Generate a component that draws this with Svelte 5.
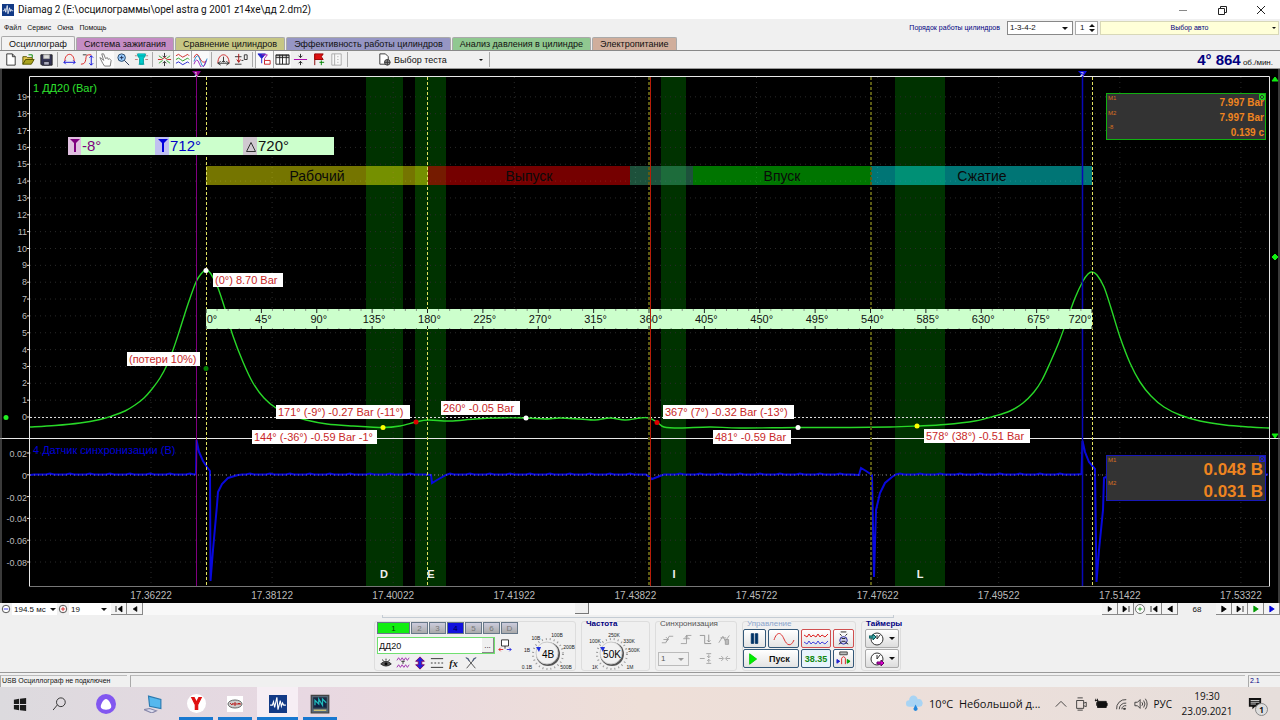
<script>
	// Tabs across the top of the program window
	const tabs = [
		{ name: 'Осциллограф', color: '#f2f2f2' },
		{ name: 'Система зажигания', color: '#c48cc4' },
		{ name: 'Сравнение цилиндров', color: '#c6c684' },
		{ name: 'Эффективность работы цилиндров', color: '#9696c4' },
		{ name: 'Анализ давления в цилиндре', color: '#90c890' },
		{ name: 'Электропитание', color: '#d0ae9c' }
	];

	// Every icon is a list of [path, stroke, fill]
	const icons = {
		newFile: [['M4 2h6l3 3v9h-9zM10 2v3h3', '#333', '#fff']],
		open: [['M2 5h4l1 1h5v2H5l-3 5z', '#555500', '#e6c650'], ['M2 13l3-5h9l-3 5z', '#555500', '#aaa420'], ['M8 3h4v3', '#080', 'none']],
		save: [['M2 3h12v11H3l-1-1z', '#222', '#335'], ['M5 3h6v4H5z', '#aaa', '#ddd'], ['M5 10h6v4H5z', '#223', '#aab']],
		arch: [['M3 10C3 0 13 0 13 10', '#d22', 'none'], ['M2 11h12M4 9l-2 2 2 2M12 9l2 2-2 2', '#11d', 'none']],
		slope: [['M1 13c8 0 3-10 8-10h3', '#d22', 'none'], ['M12 4v10M10 6l2-2 2 2M10 12l2 2 2-2', '#11d', 'none'], ['M3 3h4', '#333', 'none']],
		hand: [['M4 7l-2-1 3 6 2 3h6l1-6-2-2-1 1-1-2-2 1-2-5-2 0 2 7z', '#777', '#fff']],
		zoom: [['M10 6a4 4 0 1 1-8 0a4 4 0 1 1 8 0z', '#246', '#9cf'], ['M9 9l5 5M4 6h4M6 4v4', '#235', 'none']],
		lamp: [['M1 4h2M13 4h2M1 8h3M12 8h3M3 2l2 1M13 2l-2 1', '#b77', 'none'], ['M4 4h8l-2 3v6H6V7z', '#099', '#0cc'], ['M4 2h8v2H4zM5 13h6', '#0aa', '#0dd']],
		cross: [['M8 1v5M8 10v5M6 4l2 2 2-2M6 12l2-2 2 2', '#333', 'none'], ['M1 8h4l3-2 3 2h4', '#c22', 'none'], ['M2 4l4 3M2 12l4-3M14 4l-4 3M14 12l-4-3', '#3a3', 'none']],
		waves: [['M1 4q3-3 5 0t5 0 4 0', '#c22', 'none'], ['M1 8q3-3 5 0t5 0 4 0', '#292', 'none'], ['M1 12q3-3 5 0t5 0 4 0', '#22c', 'none']],
		waves2: [['M1 6q3-7 6 0t7 4', '#c22', 'none'], ['M1 10q4-12 7 0t7-3', '#28c', 'none'], ['M1 13q3-9 6 0t7-4', '#92b', 'none']],
		dome: [['M2 12C2 0 14 0 14 12', '#c22', 'none'], ['M2 12h12M5 10l-3 2 3 2M11 10l3 2-3 2M8 5v6M6 11l2-2 2 2', '#333', 'none']],
		zero: [['M1 5h7M1 13h7', '#333', 'none'], ['M5 2v9M3 8l2 3 2-3', '#a11', 'none'], ['M11 3h3v5h-3zM8 9h2', '#333', 'none']],
		cursors: [['M1 2h8L5 7zM5 7v5', '#22c', '#22c'], ['M5 3h6l-3 4v6', '#a2a', 'none'], ['M8 9h6v4H8z', '#c22', '#fff']],
		table: [['M1 3h14v10H1zM1 6h14M5 3v10M8 3v10M12 3v10', '#222', '#fff'], ['M1 4h14', '#222', 'none']],
		split: [['M1 8h14', '#a0a', 'none'], ['M8 2v4M6 4l2 2 2-2M8 14v-4M6 12l2-2 2 2', '#222', 'none']],
		flag: [['M4 2v12', '#800', 'none'], ['M4 2h9l-2 3 2 3H4z', '#900', '#d11'], ['M9 11h5M11 9v5', '#080', 'none']],
		page: [['M3 2h10v12H3zM6 2v12', '#aaa', '#f8f8f8'], ['M9 5h1M9 8h1M9 11h1', '#999', 'none']],
		test: [['M3 2h6l3 3v8H3z', '#333', '#fff'], ['M14 11a3 3 0 1 1-6 0a3 3 0 1 1 6 0z', '#333', '#999'], ['M8 11h6M11 8v6', '#333', 'none']],
		eye: [['M2 9q6-6 12 0q-6 5-12 0z', '#222', '#555'], ['M7 8h2v2H7z', '#000', '#000'], ['M4 4l1 2M8 3v2M12 4l-1 2', '#222', 'none']],
		zigzag: [['M1 5l2-3 2 3 2-3 2 3 2-3 2 3 2-3M1 13l2-3 2 3 2-3 2 3 2-3 2 3 2-3', '#92a', 'none'], ['M6 6h4M8 6v3', '#222', 'none']],
		updown: [['M8 1L3 6h3v4H3l5 5 5-5h-3V6h3z', '#800060', '#22d']],
		lines: [['M1 3h14M1 13h14', '#222', 'none'], ['M1 8h2M5 8h2M9 8h2M13 8h2', '#222', 'none']],
		tools: [['M3 2l10 12M13 2L3 14', '#444', 'none'], ['M2 2l3 1 1 3M14 2l-3 1-1 3', '#346', '#9ac']],
		probe: [['M4 1h8v7H4zM8 8v3', '#222', '#fff'], ['M1 12h5M1 12l2-2M1 12l2 2', '#d22', 'none'], ['M10 12h5M15 12l-2-2M15 12l-2 2', '#22d', 'none']],
		pause: [['M4 2h3v12H4zM9 2h3v12H9z', '#036', '#036']],
		bug: [['M5 1h6M4 3l2 2M12 3l-2 2', '#222', 'none'], ['M12 10a4 4 0 1 1-8 0a4 4 0 1 1 8 0z', '#229', '#cce'], ['M6 8h4M6 11h4M3 14l3-2M13 14l-3-2', '#222', 'none']],
		play: [['M3 2l8 6-8 6z', '#0c0', '#0e0']],
		auto: [['M4 1h8v3H4z', '#444', '#bbb'], ['M6 14V8q2-4 4 0v6', '#d22', 'none'], ['M1 9l3 2-3 2z', '#22c', '#22c'], ['M12 9l3 2-3 2z', '#090', '#0a0']],
		clockIn: [['M14 8a6 6 0 1 1-12 0a6 6 0 1 1 12 0zM8 8l3-4M8 8V4', '#333', '#fff'], ['M0 5h4V3l3 3-3 3V7H0z', '#055', '#4aa']],
		clockOut: [['M14 8a6 6 0 1 1-12 0a6 6 0 1 1 12 0zM8 8l3-4M8 8V4', '#333', '#fff'], ['M8 11h4V9l3 3-3 3v-2H8z', '#606', '#d0c']],
		trigUp: [['M1 12h5l4-8h5M3 8h6', '#999', 'none'], ['M6 5l3 3-3 3', '#999', 'none']],
		trigEdge: [['M1 13h7V3h6M4 7h8', '#999', 'none'], ['M6 6l2-3 2 3', '#999', 'none']],
		trigDown: [['M1 3h6v10h8M12 2v9M10 9l2 2 2-2', '#888', 'none']],
		trigBoth: [['M1 12l5-8 3 6 5-7M3 6h7', '#999', 'none'], ['M9 8h4v6H9z', '#999', '#bbb']],
		level: [['M1 8h6M9 2h6M9 14h6M12 3v4M12 13V9', '#999', 'none'], ['M10 5l2 2 2-2M10 11l2-2 2 2', '#999', 'none']],
		inward: [['M1 8h5M4 5l3 3-3 3M15 8h-5M12 5L9 8l3 3', '#999', 'none']],
		minus: [['M13 8a5 5 0 1 1-10 0a5 5 0 1 1 10 0z', '#222', '#fff'], ['M5 8h6', '#00d', 'none']],
		plus: [['M13 8a5 5 0 1 1-10 0a5 5 0 1 1 10 0z', '#222', '#fff'], ['M5 8h6M8 5v6', '#c00', 'none']],
		target: [['M14 8a6 6 0 1 1-12 0a6 6 0 1 1 12 0z', '#444', '#fff'], ['M5 8h6M8 5v6', '#080', '#080']],
		first: [['M4 4v8', '#000', 'none'], ['M12 4L7 8l5 4z', '#000', '#000']],
		prev: [['M11 4L5 8l6 4z', '#000', '#000']],
		next: [['M5 4l6 4-6 4z', '#000', '#000']],
		last: [['M12 4v8', '#000', 'none'], ['M4 4l5 4-5 4z', '#000', '#000']],
		nextGreen: [['M5 4l6 4-6 4z', '#090', '#090']],
		nextBlue: [['M5 4l6 4-6 4z', '#00d', '#00d']],
		logo: [['M0 0h16v16H0z', 'none', '#123a86'], ['M1 9h2l1-3 1 5 2-9 1 11 2-8 1 5 1-3 1 2h2', '#fff', 'none']],
		windows: [['M1 3l6-1v6H1zM8 2l7-1v7H8zM1 9h6v6l-6-1zM8 9h7v7l-7-1z', 'none', '#1c1c1c']],
		search: [['M14 6a5 5 0 1 1-10 0a5 5 0 1 1 10 0zM5 9l-5 6', '#222', 'none']],
		alice: [['M16 8a8 8 0 1 1-16 0a8 8 0 1 1 16 0z', 'none', '#8257f0'], ['M8 4c2 0 5 5 4 7s-7 2-8 0 2-7 4-7z', 'none', '#fff']],
		computer: [['M4 1l11 3v8L5 10z', '#2a7ab0', '#55b8ee'], ['M0 13l5-1 6 2-4 2z', '#88a', '#dde']],
		yandex: [['M16 8a8 8 0 1 1-16 0a8 8 0 1 1 16 0z', 'none', '#fff'], ['M4 3h2l2 4 2-4h2L9 9v4H7V9z', '#e01010', '#e01010']],
		yom: [['M0 0h16v16H0z', 'none', '#fff'], ['M15 8a7 4 0 1 1-14 0a7 4 0 1 1 14 0z', '#666', '#ccc'], ['M3 7l2 2 1-2M7 7h2v2H7zM11 9V7l1 1 1-1v2', '#b22', 'none']],
		scope: [['M1 1h14v14H1z', '#444', '#567'], ['M3 3h10v8H3z', '#234', '#124'], ['M4 9V5l3 3V4l3 5V4l3 3', '#2bb', 'none'], ['M3 13h10', '#dc7', 'none']],
		cloud: [['M3 11a3 3 0 0 1 0-6a4 4 0 0 1 8-1a3 3 0 0 1 2 7z', 'none', '#a8d4f4'], ['M9 9l-2 4a2 2 0 1 0 4 0z', 'none', '#2288dd']],
		chevron: [['M2 11l6-6 6 6', '#333', 'none']],
		camera: [['M3 4h8v9H3zM11 7l3-1v5l-3-1M4 1h6M4 15h6', '#333', 'none']],
		battery: [['M4 5h10v7H4zM14 7h1v3h-1z', '#111', '#111'], ['M1 4h4M2 2v3M4 2v3M3 6v4', '#111', 'none']],
		wifi: [['M3 14A10 10 0 0 1 14 3M6 14a7 7 0 0 1 8-7M9 14a4 4 0 0 1 5-4', '#333', 'none'], ['M11 13h2v1h-2z', '#333', '#333']],
		speaker: [['M1 6h3l3-3v10l-3-3H1zM9 6q2 2 0 4M11 4q3 4 0 8M13 2q4 6 0 12', '#333', 'none']],
		notify: [['M1 1h14v10H8l-3 3v-3H1z', 'none', '#111'], ['M3 4h10M3 6h10M3 8h6', '#ddd', 'none']]
	};

	const toolGroups = [
		['newFile', 'open', 'save'],
		['arch', 'slope', 'hand', 'zoom', 'lamp'],
		['cross', 'waves', 'waves2'],
		['dome', 'zero'],
		['cursors', 'table', 'split', 'flag', 'page']
	];
	const pressed = ['hand', 'waves', 'waves2', 'cursors', 'table'];

	// Chart scales
	const degX = (deg) => 206 + deg * 886 / 720;
	const barY = (bar) => 417 - bar * 16.85;

	const bars = Array.from({ length: 20 }, (_, i) => i);
	const volts = ['0.02', '0', '-0.02', '-0.04', '-0.06', '-0.08'].map((label, i) => ({ label, y: 453 + i * 21.8 }));
	const times = Array.from({ length: 10 }, (_, i) => ({
		label: (17.36222 + i * 0.019).toFixed(5),
		x: 151 + i * 121.1
	}));
	const degrees = Array.from({ length: 17 }, (_, i) => i * 45);
	const ticks = Array.from({ length: 81 }, (_, i) => i * 9);

	const zones = [
		{ x: 366, w: 37, letter: 'D', tx: 384 },
		{ x: 415, w: 31, letter: 'E', tx: 431 },
		{ x: 661, w: 25, letter: 'I', tx: 674 },
		{ x: 895, w: 50, letter: 'L', tx: 920 }
	];

	const phases = [
		{ name: 'Рабочий', x: 206, w: 222, tx: 317, color: '#ffff00' },
		{ name: 'Выпуск', x: 428, w: 202, tx: 529, color: '#ff0000' },
		{ name: '', x: 630, w: 63, tx: 661, color: '#40b080' },
		{ name: 'Впуск', x: 693, w: 178, tx: 782, color: '#00ff00' },
		{ name: 'Сжатие', x: 871, w: 221, tx: 982, color: '#00ffff' }
	];

	const labels = [
		{ text: '(0°) 8.70 Bar', x: 213, y: 273, w: 70 },
		{ text: '(потери 10%)', x: 127, y: 352, w: 73 },
		{ text: '171° (-9°) -0.27 Bar (-11°)', x: 276, y: 405, w: 134 },
		{ text: '144° (-36°) -0.59 Bar -1°', x: 252, y: 430, w: 125 },
		{ text: '260° -0.05 Bar', x: 441, y: 401, w: 79 },
		{ text: '367° (7°) -0.32 Bar (-13°)', x: 663, y: 405, w: 131 },
		{ text: '481° -0.59 Bar', x: 713, y: 430, w: 78 },
		{ text: '578° (38°) -0.51 Bar', x: 924, y: 429, w: 106 }
	];

	const dots = [
		[206, 270.5, '#fff'], [206, 368.5, '#008000'], [383, 427.5, '#ff0'], [416, 422, '#d00'],
		[526, 418, '#fff'], [657, 422.5, '#d00'], [798, 427.5, '#fff'], [917, 426, '#ff0']
	];

	const pressure = [
		[30, 427], [55, 425.5], [80, 423], [100, 419.5], [112, 416], [125, 411], [135, 405], [144, 398],
		[152, 389], [160, 378], [167, 365], [173, 350], [180, 329], [188, 304], [196, 282], [201, 274],
		[206, 270], [211, 274], [218, 288], [225, 309], [233, 336], [243, 362], [253, 383], [264, 398],
		[276, 408], [290, 415], [306, 420], [327, 424], [353, 426], [383, 427.5], [400, 426], [416, 422],
		[428, 420], [450, 421], [475, 419], [500, 418], [526, 418], [545, 419], [560, 418], [580, 419],
		[595, 420], [610, 418], [625, 420], [640, 418], [649, 418], [657, 422], [664, 427], [680, 428],
		[710, 427], [740, 428], [798, 427.5], [850, 427.5], [890, 427], [917, 426], [945, 424.5],
		[975, 421], [995, 416], [1010, 411], [1023, 403], [1034, 392], [1042, 380], [1050, 363],
		[1059, 342], [1067, 320], [1075, 298], [1083, 281], [1088, 274], [1092, 272], [1097, 275],
		[1104, 287], [1111, 308], [1120, 337], [1130, 363], [1140, 382], [1151, 396], [1164, 407],
		[1180, 415], [1200, 421], [1225, 425], [1250, 427], [1269, 428]
	];

	// Smooth line through the points
	function smooth(points) {
		let d = `M${points[0][0]} ${points[0][1]}`;
		for (let i = 0; i < points.length - 1; i++) {
			const p0 = points[i - 1] || points[i];
			const p1 = points[i];
			const p2 = points[i + 1];
			const p3 = points[i + 2] || p2;
			d += `C${p1[0] + (p2[0] - p0[0]) / 6} ${p1[1] + (p2[1] - p0[1]) / 6} ${p2[0] - (p3[0] - p1[0]) / 6} ${p2[1] - (p3[1] - p1[1]) / 6} ${p2[0]} ${p2[1]}`;
		}
		return d;
	}

	// Flat part of the sync signal with a little noise on it
	function flat(from, to) {
		let d = '';
		for (let x = from; x < to; x += 4) {
			d += `L${x} ${474.5 - ((x * 7) % 5 === 0 ? 1 : 0)}`;
		}
		return d;
	}

	const sync = 'M30 475' + flat(34, 195) +
		'L196 474L196.5 440L199 452L203 461L207 467L210 471L210.5 581L213 550L217 505L218 492L222 484L228 478L238 475' + flat(242, 428) +
		'L431 475L432 483L437 480L446 475' + flat(450, 648) +
		'L652 479L660 476' + flat(664, 856) +
		'L859 475L861 468L866 471L872 475L874 577L876 510L880 493L885 483L892 477' + flat(896, 1080) +
		'L1081.5 474L1082.5 441L1085 452L1089 462L1095 469L1096.5 582L1099 550L1103 510L1104 478L1108 476' + flat(1112, 1269);

	const channels = ['1', '2', '3', '4', '5', '6', 'D'];
	const channelTools = ['eye', 'zigzag', 'updown', 'lines', 'fx', 'tools'];
	const syncTools = ['trigUp', 'trigEdge', 'trigDown', 'trigBoth'];

	const voltKnob = {
		value: '4В',
		marks: [['0.1В', 9, 47], ['1В', 9, 30], ['10В', 18, 18], ['100В', 39, 15], ['200В', 51, 27], ['500В', 48, 47]]
	};
	const freqKnob = {
		value: '50K',
		marks: [['1K', 13, 47], ['100K', 13, 21], ['250K', 32, 15], ['330K', 47, 21], ['500K', 52, 30], ['1M', 48, 47]]
	};

	const apps = [
		{ icon: 'windows', title: 'Пуск', size: 14, width: 40 },
		{ icon: 'search', title: 'Поиск', size: 14, width: 40 },
		{ icon: 'alice', title: 'Алиса', size: 20, width: 52 },
		{ icon: 'computer', title: 'Компьютер', size: 18, width: 42 },
		{ icon: 'yandex', title: 'Яндекс', size: 19, width: 34, open: true },
		{ icon: 'yom', title: 'YOM', size: 16, width: 34, open: true },
		{ icon: 'logo', title: 'Diamag 2', size: 18, width: 41, open: true, active: true },
		{ icon: 'scope', title: 'Осциллограф', size: 20, width: 34, open: true }
	];
	const tray = ['chevron', 'camera', 'battery', 'wifi', 'speaker'];

	let tab = $state('Осциллограф');
	let channel = $state('4');
</script>

{#snippet icon(name, size)}
	<svg class="icon" width={size} height={size} viewBox="0 0 16 16" aria-hidden="true">
		{#each icons[name] as [d, stroke, fill]}
			<path {d} {stroke} {fill} />
		{/each}
	</svg>
{/snippet}

{#snippet knob(data)}
	<svg class="knob" width="64" height="50" viewBox="0 0 64 50">
		<circle class="dial" cx="30" cy="32" r="15" />
		<circle class="shade" cx="30" cy="32" r="12" />
		<circle class="face" cx="29" cy="31" r="11" />
		<path class="pointer" d="M18 25l5 0-2 5z" />
		<text class="value" x="30" y="36">{data.value}</text>
		{#each data.marks as [text, x, y]}
			<text class="mark" {x} {y}>{text}</text>
		{/each}
	</svg>
{/snippet}

<div class="window">
	<header class="title-bar">
		{@render icon('logo', 12)}
		<h1>Diamag 2 (E:\осцилограммы\opel astra g 2001 z14xe\дд 2.dm2)</h1>
		<button aria-label="Свернуть"><svg width="10" height="10"><path d="M1 5.5h8" stroke="#888" /></svg></button>
		<button aria-label="Развернуть"><svg width="10" height="10"><path d="M1.5 3.5h6v6h-6zM3.5 3.5v-2h6v6h-2" stroke="#222" fill="none" /></svg></button>
		<button aria-label="Закрыть"><svg width="10" height="10"><path d="M1 1l8 8M9 1l-8 8" stroke="#222" /></svg></button>
	</header>

	<div class="menu-bar">
		<nav>
			<a href="#file">Файл</a>
			<a href="#service">Сервис</a>
			<a href="#windows">Окна</a>
			<a href="#help">Помощь</a>
		</nav>
		<label for="order">Порядок работы цилиндров</label>
		<span class="drop order">
			<select id="order"><option>1-3-4-2</option></select>
		</span>
		<span class="spin">
			<input aria-label="Цилиндр" value="1" />
			<svg width="6" height="10"><path d="M0 4l3-3 3 3zM0 6l3 3 3-3z" fill="#111" /></svg>
		</span>
		<button class="car">Выбор авто</button>
	</div>

	<div class="tabs">
		{#each tabs as t}
			<button class:active={tab === t.name} style="background: {t.color}" onclick={() => (tab = t.name)}>{t.name}</button>
		{/each}
	</div>

	<div class="toolbar">
		{#each toolGroups as group}
			{#each group as name}
				<button class="tool" class:pressed={pressed.includes(name)} aria-label={name}>{@render icon(name, 15)}</button>
			{/each}
			<span class="sep"></span>
		{/each}
		<button class="test">{@render icon('test', 15)} Выбор теста</button>
		<span class="sep"></span>
		<p class="rpm"><b>4° 864</b> об./мин.</p>
	</div>

	<svg class="chart" viewBox="0 69 1280 534">
		<rect x="0" y="69" width="1280" height="534" />

		<!-- Valve zones -->
		{#each zones as z}
			<rect x={z.x} y="77" width={z.w} height="509" fill="#003200" />
		{/each}

		<!-- Grid and axis labels -->
		{#each bars as b}
			<path class="grid" d="M30 {barY(b)}H1269" />
			<path class="frame" d="M27 {barY(b)}h3" />
			<text class="axis end" x="27" y={barY(b) + 3}>{b}</text>
		{/each}
		{#each volts as v}
			<path class="grid" d="M30 {v.y}H1269" />
			<path class="frame" d="M27 {v.y}h3" />
			<text class="axis end" x="27" y={v.y + 4}>{v.label}</text>
		{/each}
		{#each times as t}
			<path class="grid" d="M{t.x} 77V586" />
			<text class="time" x={t.x} y="599">{t.label}</text>
		{/each}

		<path class="zero" d="M30 417.5H1269" />
		<path class="frame" d="M0 438.5H1280M29.5 586V76.5H1269.5V586" />
		<path d="M29 586.5H1270" stroke="#777" />
		<path d="M1 69V603M1279 69V603" stroke="#777" />

		<text class="name" x="33" y="92" fill="#2fe02f">1 ДД20 (Bar)</text>
		<text class="name" x="33" y="454" fill="#0000d8">4 Датчик синхронизации (В)</text>

		<path d={sync} fill="none" stroke="#0808dc" stroke-width="2" />
		<path class="zero dim" d="M30 475H1269" />
		<path d={smooth(pressure)} fill="none" stroke="#28d828" stroke-width="1.4" />

		<!-- Phases of the cycle -->
		{#each phases as p}
			<rect x={p.x} y="166" width={p.w} height="19" fill={p.color} fill-opacity="0.46" />
			<text class="phase" x={p.tx} y="181">{p.name}</text>
		{/each}

		<path class="angle" d="M206.5 77V586M427.5 77V586M1092.5 77V586" />
		<path class="angle dim" d="M649 77V586M871 77V586" />
		<path d="M1082.5 72V586" stroke="#0808b8" stroke-width="1.5" />
		<path d="M196.5 72V586" stroke="#800080" />

		<!-- Degree ruler -->
		<rect x="206" y="309" width="886" height="20" fill="#ccffcc" />
		{#each ticks as t}
			<path class="tick" class:major={t % 45 === 0} d="M{degX(t)} 309v{t % 45 ? 2 : 4}M{degX(t)} 329v{t % 45 ? -1 : -3}" />
		{/each}
		{#each degrees as d}
			<text class="degree" x={d === 0 ? 212 : d === 720 ? 1080 : degX(d) + 2} y="323">{d}°</text>
		{/each}
		<path d="M650.5 77V586" stroke="#b81c08" />

		<path d="M192 71h9l-4 6z" fill="#900090" />
		<path d="M1078 71h9l-4 6z" fill="#1010dd" />
		<text class="marker" x="196" y="76">1</text>
		<text class="marker" x="1082" y="76">2</text>

		<!-- Values at the marked points -->
		{#each labels as l}
			<rect x={l.x} y={l.y} width={l.w} height="14" fill="#fff" />
			<text class="label" x={l.x + 2} y={l.y + 11}>{l.text}</text>
		{/each}
		{#each dots as [cx, cy, fill]}
			<circle {cx} {cy} r="2.5" {fill} />
		{/each}
		{#each zones as z}
			<text class="letter" x={z.tx} y="578">{z.letter}</text>
		{/each}

		<!-- Cursor angles -->
		<rect x="68" y="137" width="266" height="18" fill="#ccffcc" />
		<rect x="68" y="137" width="13" height="18" fill="#e0c0e0" />
		<rect x="155" y="137" width="14" height="18" fill="#c0c0f0" />
		<rect x="243" y="137" width="14" height="18" fill="#d0c8d0" />
		<path d="M70 139h10l-4 4v9h-2v-9z" fill="#800080" />
		<path d="M158 139h10l-4 4v9h-2v-9z" fill="#0000dd" />
		<path d="M246.5 151.5h9l-4.5-9z" fill="none" stroke="#333" />
		<text class="cursor" x="82" y="151" fill="#800080">-8°</text>
		<text class="cursor" x="170" y="151" fill="#0000c8">712°</text>
		<text class="cursor" x="258" y="151" fill="#111">720°</text>

		<!-- Readouts -->
		<rect x="1106.5" y="93.5" width="159" height="46" fill="#333" stroke="#10b010" />
		<path d="M1259.5 94.5h5v5h-5zl5 5m0-5l-5 5" stroke="#20d020" fill="none" />
		<text class="small" x="1108" y="100">M1</text>
		<text class="small" x="1108" y="115">M2</text>
		<text class="small" x="1108" y="129">-8</text>
		<text class="bar-value" x="1264" y="106">7.997 Bar</text>
		<text class="bar-value" x="1264" y="121">7.997 Bar</text>
		<text class="bar-value" x="1264" y="136">0.139 c</text>
		<rect x="1106.5" y="455.5" width="159" height="45" fill="#333" stroke="#1818b8" />
		<path d="M1259.5 456.5h5v5h-5zl5 5m0-5l-5 5" stroke="#2020c8" fill="none" />
		<text class="small" x="1108" y="462">M1</text>
		<text class="small" x="1108" y="485">M2</text>
		<text class="volt-value" x="1263" y="475">0.048 В</text>
		<text class="volt-value" x="1263" y="497">0.031 В</text>

		<circle cx="6" cy="417.5" r="2.5" fill="#2e2" />
		<path d="M1275 254l3 3-3 3-3-3zM1272 81h6l-3-4zM1272 434h6l-3 4z" fill="#1e1" stroke="#1e1" />
	</svg>

	<div class="scroll">
		{@render icon('minus', 12)}
		<span class="drop zoom"><select aria-label="Масштаб"><option>194.5 мс</option></select></span>
		{@render icon('plus', 12)}
		<span class="drop frame-count"><select aria-label="Кадр"><option>19</option></select></span>
		<button aria-label="В начало">{@render icon('first', 12)}</button>
		<button aria-label="Назад">{@render icon('prev', 10)}</button>
		<div class="track"><span class="thumb"></span></div>
		<button aria-label="Вперёд">{@render icon('next', 10)}</button>
		<button aria-label="В конец">{@render icon('last', 12)}</button>
		{@render icon('target', 12)}
		<button aria-label="Первый кадр">{@render icon('first', 12)}</button>
		<button aria-label="Предыдущий кадр">{@render icon('prev', 12)}</button>
		<output>68</output>
		<button aria-label="Следующий кадр">{@render icon('next', 12)}</button>
		<button aria-label="Последний кадр">{@render icon('last', 12)}</button>
		<button aria-label="Воспроизвести">{@render icon('nextGreen', 12)}</button>
		<button aria-label="Повтор">{@render icon('nextBlue', 12)}</button>
	</div>

	<div class="panel">
		<div class="strip"></div>
		<div class="groups">
			<section class="group channel">
				<div class="channel-left">
					<div class="channels">
						{#each channels as c}
							<button class:first={c === '1'} class:selected={channel === c} onclick={() => (channel = c)}>{c}</button>
						{/each}
					</div>
					<div class="sensor">
						<span class="sensor-box">
							<input aria-label="Датчик" value="ДД20" />
							<button>...</button>
						</span>
						{@render icon('probe', 14)}
					</div>
					<div class="channel-tools">
						{#each channelTools as name}
							<button aria-label={name}>
								{#if name === 'fx'}<em>fx</em>{:else}{@render icon(name, 14)}{/if}
							</button>
						{/each}
					</div>
				</div>
				{@render knob(voltKnob)}
			</section>

			<section class="group frequency">
				<h2>Частота</h2>
				{@render knob(freqKnob)}
			</section>

			<section class="group sync">
				<h2>Синхронизация</h2>
				<div class="sync-grid">
					{#each syncTools as name}
						<button aria-label={name} disabled>{@render icon(name, 13)}</button>
					{/each}
					<span class="drop source"><select aria-label="Канал" disabled><option>1</option></select></span>
					<button aria-label="Уровень" disabled>{@render icon('level', 13)}</button>
					<button aria-label="Центр" disabled>{@render icon('inward', 13)}</button>
				</div>
			</section>

			<section class="group control">
				<h2>Управление</h2>
				<div class="control-grid">
					<button aria-label="Пауза">{@render icon('pause', 13)}</button>
					<button aria-label="Синус"><svg width="24" height="14"><path d="M2 8C5-1 9 0 12 7s7 8 10 1" fill="none" stroke="#d33" /></svg></button>
					<button class="red" aria-label="Сигнал"><svg width="26" height="14"><path d="M1 3l3 2 2-3 2 3 2-2 3 2 2-3 2 3 2-2 3 2 3-3" fill="none" stroke="#d22" /><path d="M1 10l3 2 2-3 2 3 2-2 3 2 2-3 2 3 2-2 3 2 3-3" fill="none" stroke="#44d" /></svg></button>
					<button class="red" aria-label="Отладка">{@render icon('bug', 15)}</button>
					<button class="run">{@render icon('play', 14)}<b>Пуск</b></button>
					<button class="number">38.35</button>
					<button aria-label="Авто">{@render icon('auto', 15)}</button>
				</div>
			</section>

			<section class="group timers">
				<h2>Таймеры</h2>
				<button aria-label="Таймер запуска">{@render icon('clockIn', 16)}<i></i></button>
				<button aria-label="Таймер остановки">{@render icon('clockOut', 16)}<i></i></button>
			</section>
		</div>
	</div>

	<footer class="status">
		<span class="device">USB Осциллограф не подключен</span>
		<span class="message"></span>
		<span class="version">2.1</span>
	</footer>

	<div class="taskbar">
		{#each apps as app}
			<button class:open={app.open} class:active={app.active} style="width: {app.width}px" aria-label={app.title}>{@render icon(app.icon, app.size)}</button>
		{/each}
		<div class="tray">
			{@render icon('cloud', 17)}
			<span class="weather">10°C&nbsp; Небольшой д...</span>
			{#each tray as name}
				{@render icon(name, 14)}
			{/each}
			<span class="lang">РУС</span>
			<time>19:30<br />23.09.2021</time>
			<span class="notify">{@render icon('notify', 14)}<b>1</b></span>
		</div>
	</div>
</div>

<style>
	:global(body) {
		background: #f0f0f0;
	}

	.window {
		font-family: "Liberation Sans", Arial, sans-serif;
		font-size: 8px;
		color: #111;
		background: #f0f0f0;
	}

	.window :is(button, input, select) {
		font: inherit;
		color: inherit;
		margin: 0;
		padding: 0;
		border: 0;
		background: none;
		box-sizing: border-box;
	}

	.window button {
		display: flex;
		align-items: center;
		justify-content: center;
	}

	.icon {
		flex: none;
		display: block;
	}

	a {
		color: inherit;
		text-decoration: none;
	}

	h1, h2, p {
		margin: 0;
		font-weight: normal;
	}

	/* Title bar */
	.title-bar {
		display: flex;
		align-items: center;
		height: 19px;
		padding-left: 2px;
		background: #fff;
	}

	.title-bar h1 {
		flex: 1;
		margin-left: 4px;
		font-family: Roboto, "Open Sans", sans-serif;
		font-size: 10px;
	}

	.title-bar button {
		width: 39px;
	}

	/* Menu */
	.menu-bar {
		display: flex;
		align-items: center;
		height: 17px;
		padding-right: 1px;
		font-size: 7px;
	}

	nav {
		display: flex;
		flex: 1;
		gap: 6px;
		padding-left: 4px;
	}

	.menu-bar label, .menu-bar .car {
		color: #000080;
	}

	.menu-bar label {
		margin-right: 7px;
	}

	.drop {
		position: relative;
		display: flex;
		background: #fff;
	}

	.drop select {
		appearance: none;
		width: 100%;
		padding-left: 2px;
	}

	.drop::after, .timers i, .menu-bar .car::after, .toolbar .test::after {
		content: "";
		border: 3px solid transparent;
		border-top-color: #111;
		border-bottom: 0;
	}

	.drop::after {
		position: absolute;
		right: 4px;
		top: 5px;
		pointer-events: none;
	}

	.order {
		width: 66px;
		height: 14px;
		border: 1px solid #888;
		box-sizing: border-box;
		font-size: 8px;
	}

	.spin {
		display: flex;
		align-items: center;
		width: 23px;
		height: 14px;
		margin: 0 2px;
		border: 1px solid #aaa;
		box-sizing: border-box;
		background: #fff;
		font-size: 8px;
	}

	.spin input {
		width: 13px;
		padding-left: 4px;
	}

	.menu-bar .car {
		position: relative;
		width: 14%;
		height: 14px;
		background: #ffffd8;
		border: 1px solid #d8d8b8;
	}

	.menu-bar .car::after {
		position: absolute;
		right: 2px;
		top: 5px;
		border-width: 2px;
	}

	/* Tabs */
	.tabs {
		display: flex;
		align-items: flex-end;
		gap: 1px;
		height: 14px;
		padding-left: 1px;
		border-bottom: 1px solid #888;
	}

	.tabs button {
		height: 13px;
		padding: 0 7px;
		font-size: 9px;
		border: 1px solid #aaa;
		border-bottom: 0;
		border-radius: 2px 2px 0 0;
	}

	.tabs .active {
		height: 14px;
	}

	/* Toolbar */
	.toolbar {
		display: flex;
		align-items: center;
		height: 17px;
		padding-left: 1px;
		border-bottom: 1px solid #999;
	}

	.toolbar .tool {
		width: 18px;
		height: 17px;
	}

	.toolbar .pressed {
		background: #fafafa;
		border-left: 1px solid #aaa;
	}

	.sep {
		width: 5px;
		height: 15px;
		background: linear-gradient(90deg, transparent 2px, #aaa 2px, #aaa 3px, transparent 3px);
	}

	.toolbar .test {
		position: relative;
		width: 110px;
		justify-content: flex-start;
		margin-left: 27px;
		gap: 2px;
		font-size: 9px;
	}

	.toolbar .test::after {
		position: absolute;
		right: 4px;
		top: 7px;
		border-width: 2px;
	}

	.rpm {
		margin-left: auto;
		padding-right: 7px;
	}

	.rpm b {
		font-size: 15px;
		line-height: 17px;
		color: #000080;
	}

	/* Chart */
	.chart {
		display: block;
		width: 100%;
		height: auto;
	}

	.grid {
		stroke: #2a2a2a;
		stroke-dasharray: 1 4;
	}

	.frame {
		fill: none;
		stroke: #e8e8e8;
	}

	.zero {
		stroke: #ddd;
		stroke-dasharray: 2 2;
	}

	.zero.dim {
		stroke: #888;
		stroke-dasharray: 1 3;
	}

	.angle {
		stroke: #e0e060;
		stroke-dasharray: 3 2;
	}

	.angle.dim {
		stroke: #5c5c14;
		stroke-width: 2;
	}

	.tick {
		stroke: #8a9a8a;
	}

	.tick.major {
		stroke: #222;
	}

	.axis {
		font-size: 9px;
		fill: #bbb;
	}

	.end, .bar-value, .volt-value {
		text-anchor: end;
	}

	.time, .phase, .degree, .letter, .marker {
		text-anchor: middle;
	}

	.time {
		font-size: 10px;
		fill: #bbb;
	}

	.name, .degree, .label {
		font-size: 11px;
	}

	.label {
		fill: #c82828;
	}

	.degree {
		fill: #111;
	}

	.phase {
		font-size: 14px;
		fill: #0a0a0a;
	}

	.cursor {
		font-size: 15px;
	}

	.letter {
		font-size: 11px;
		font-weight: bold;
		fill: #eee;
	}

	.marker {
		font-size: 6px;
		fill: #fff;
	}

	.small {
		font-size: 6px;
		fill: #d87020;
	}

	.bar-value {
		font-size: 10px;
		font-weight: bold;
		fill: #ee8420;
	}

	.volt-value {
		font-size: 17px;
		font-weight: bold;
		fill: #ee8420;
	}

	/* Scroll line under the chart */
	.scroll {
		display: flex;
		align-items: center;
		height: 12px;
	}

	.scroll select {
		height: 12px;
	}

	.scroll .zoom {
		width: 45px;
	}

	.scroll .zoom::after {
		right: 1px;
	}

	.scroll .frame-count {
		width: 42px;
	}

	.scroll button {
		width: 16px;
		height: 12px;
		border-right: 1px solid #888;
		border-bottom: 1px solid #888;
		background: #f4f4f4;
	}

	.track {
		flex: 1;
		height: 12px;
		background: #f8f8f8;
	}

	.thumb {
		display: block;
		width: 13px;
		height: 10px;
		margin-left: 45%;
		background: #f0f0f0;
		border-right: 1px solid #777;
		border-bottom: 1px solid #777;
	}

	output {
		width: 38px;
		text-align: center;
	}

	/* Control panel */
	.panel {
		height: 57px;
		padding-right: 5px;
		border-bottom: 1px solid #999;
	}

	.strip {
		width: 510px;
		height: 2px;
		margin: 0 auto 3px;
		border: solid #c4ccd4;
		border-width: 0 1px 1px;
	}

	.groups {
		display: flex;
		justify-content: center;
		gap: 5px;
	}

	.group {
		position: relative;
		height: 50px;
		border: 1px solid #ddd;
		border-radius: 3px;
		box-sizing: border-box;
	}

	.group h2 {
		position: absolute;
		left: 4px;
		top: -3px;
		font-size: 8px;
		line-height: 9px;
		font-weight: bold;
		color: #000080;
		background: #f0f0f0;
	}

	.channel {
		display: flex;
		width: 202px;
	}

	.channel-left {
		width: 141px;
		padding-left: 2px;
	}

	.channels {
		display: flex;
		gap: 1px;
	}

	.channels button {
		width: 17px;
		height: 12px;
		color: #777;
		background: linear-gradient(#ccd, #aaa);
		border: 1px solid #678;
	}

	.channels .first {
		width: 33px;
		color: #040;
		background: #11ee11;
	}

	.channels .selected {
		color: #004;
		background: #1111dd;
	}

	.sensor {
		display: flex;
		align-items: center;
		gap: 3px;
		margin: 3px 0 2px;
	}

	.sensor-box {
		display: flex;
		width: 118px;
		height: 17px;
		border: 1px solid #70e070;
		box-sizing: border-box;
		background: #fff;
	}

	.sensor-box input {
		flex: 1;
		min-width: 0;
		font-size: 9px;
		padding-left: 1px;
	}

	.sensor-box button {
		width: 12px;
		border-right: 1px solid #888;
		border-bottom: 1px solid #888;
		background: #f0f0f0;
	}

	.channel-tools {
		display: flex;
	}

	.channel-tools button {
		width: 17px;
		height: 14px;
	}

	em {
		font-family: "Liberation Serif", serif;
		font-weight: bold;
		font-size: 10px;
	}

	.knob {
		display: block;
		flex: none;
	}

	.dial {
		fill: none;
		stroke: #999;
		stroke-width: 2;
		stroke-dasharray: 1 3;
	}

	.shade {
		fill: #555;
	}

	.face {
		fill: #f2f2f2;
		stroke: #ccc;
	}

	.pointer {
		fill: #2233dd;
	}

	.value {
		font-size: 10px;
		text-anchor: middle;
	}

	.mark {
		font-size: 5px;
		text-anchor: middle;
		fill: #222;
	}

	.frequency {
		width: 69px;
	}

	.sync {
		width: 82px;
	}

	.group.sync h2 {
		font-weight: normal;
		color: #555;
	}

	.sync-grid {
		display: grid;
		grid-template-columns: repeat(4, 19px);
		grid-auto-rows: 19px;
		align-items: center;
		justify-content: center;
		padding-top: 8px;
	}

	.source {
		grid-column: span 2;
		width: 31px;
		height: 14px;
		border: 1px solid #bbb;
		box-sizing: border-box;
		background: #f0f0f0;
	}

	.source::after {
		border-top-color: #999;
	}

	.control {
		width: 114px;
	}

	.group.control h2 {
		font-weight: normal;
		color: #8aa4cc;
	}

	.control-grid {
		display: grid;
		grid-template-columns: 23px 31px 30px 21px;
		grid-auto-rows: 19px;
		gap: 1px 2px;
		padding-top: 7px;
	}

	.control-grid button {
		border: 1px solid #345878;
		border-radius: 2px;
		background: linear-gradient(#fff, #e4e4e4);
	}

	.control-grid .red {
		border-color: #d05050;
	}

	.control-grid .run {
		grid-column: span 2;
		justify-content: flex-start;
		gap: 8px;
		padding-left: 3px;
		font-size: 9px;
	}

	.control-grid .number {
		font-size: 9px;
		font-weight: bold;
		color: #118811;
		background: #e8f4fc;
	}

	.timers {
		display: flex;
		flex-direction: column;
		gap: 1px;
		width: 40px;
		padding: 7px 1px 0 3px;
	}

	.timers button {
		height: 19px;
		gap: 4px;
		border: 1px solid #aaa;
		border-radius: 2px;
		background: linear-gradient(#fff, #ddd);
	}

	/* Status */
	.status {
		display: flex;
		gap: 3px;
		height: 12px;
		padding-top: 2px;
		font-size: 7px;
		line-height: 10px;
	}

	.status span {
		border-top: 1px solid #bbb;
		border-left: 1px solid #aaa;
	}

	.device {
		width: 125px;
		padding-left: 1px;
	}

	.message {
		flex: 1;
	}

	.version {
		width: 30px;
		padding-left: 1px;
		color: #000080;
	}

	/* Taskbar */
	.taskbar {
		display: flex;
		height: 33px;
		background: linear-gradient(90deg, #dcdade, #e8d8e2 24%, #eedfd8 50%, #ecdfda 75%, #e6dedb);
		font-family: "Open Sans", "Noto Sans", sans-serif;
	}

	.taskbar .open {
		box-shadow: inset 0 -3px #1878d0;
		margin-left: 5px;
	}

	.taskbar .active {
		background: #f6eef4;
	}

	.tray {
		display: flex;
		align-items: center;
		gap: 6px;
		margin-left: auto;
		padding-right: 18px;
	}

	.weather {
		margin-right: 7px;
		font-size: 11px;
	}

	.lang {
		font-size: 10px;
	}

	time {
		width: 58px;
		font-size: 10px;
		line-height: 15px;
		text-align: center;
	}

	.notify {
		position: relative;
		margin-left: 6px;
	}

	.notify b {
		position: absolute;
		left: 7px;
		top: 6px;
		width: 11px;
		border: 1px solid #888;
		border-radius: 50%;
		background: #ddd;
		font-size: 8px;
		line-height: 11px;
		text-align: center;
	}
</style>
